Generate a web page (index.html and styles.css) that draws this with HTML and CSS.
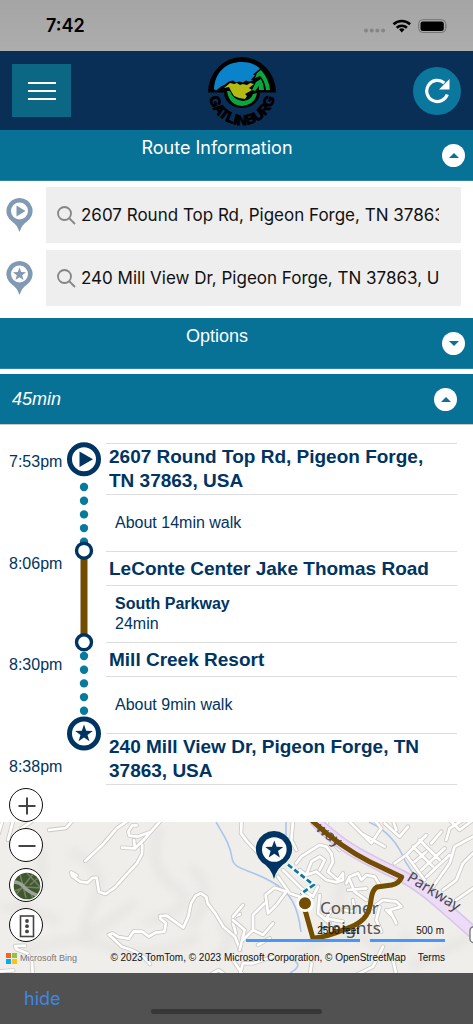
FILE: index.html
```html
<!DOCTYPE html>
<html lang="en">
<head>
<meta charset="utf-8">
<meta name="viewport" content="width=device-width, initial-scale=1">
<title>Gatlinburg Trip Planner</title>
<link rel="stylesheet" href="styles.css">
</head>
<body>
<div class="status">
  <span class="clock">7:42</span>
  <svg class="status-icons" width="86" height="20" viewBox="0 0 86 20" aria-hidden="true">
    <g fill="#858585"><circle cx="5" cy="14.500" r="2"/><circle cx="10.700" cy="14.500" r="2"/><circle cx="16.400" cy="14.500" r="2"/><circle cx="22.100" cy="14.500" r="2"/></g>
    <g fill="none" stroke="#000" stroke-width="2.600"><path d="M32.500 8.200a12.200 12.200 0 0 1 16.600 0"/><path d="M35.700 11.700a7.500 7.500 0 0 1 10.200 0"/></g>
    <path d="M40.800 16.400l-2.700-2.800a4 4 0 0 1 5.400 0z"/>
    <rect x="57.700" y="3.700" width="27" height="12.800" rx="4" fill="none" stroke="#747474"/>
    <rect x="59.500" y="5.400" width="23.300" height="9.500" rx="2.500"/>
    <path d="M85.500 8v4.500q1.500-2.200 0-4.500z" fill="#747474"/>
  </svg>
</div>

<header class="header">
  <button class="menu" type="button" aria-label="Menu">
    <svg width="28" height="20" viewBox="0 0 28 20"><path d="M0 2h28M0 10h28M0 18h28" stroke="#fff" stroke-width="2.200"/></svg>
  </button>
  <svg class="logo" width="70" height="70" viewBox="0 0 70 70" role="img" aria-label="Gatlinburg">
    <defs><path id="ring" d="M2 36a33 33 0 0 0 66 0"/></defs>
    <path d="M1 36.500a34 35.500 0 0 1 68 0H53a18 15.500 0 0 1-36 0z"/>
    <path d="M7 33C8 16 19 6 35 6c7 0 13 2 18 6.500l-7 6 2 1-4 4 2 1-4 1-3-1-3 2-4-1-3 1-3-2-4 1-4 3-4 2-5 4z" fill="#0b83cb"/>
    <path d="M17 32l6-5 4 1 3-1 3 2 3-1 4 1 3-2 4 1-5 4 3 2-7 4 2 2-2 3-6-1-5-2-3-5-2-4z" fill="#b3ba13"/>
    <path d="M50 17l4-3q8 9 9 20h-4q-1-9-6-14l-5 2zM49 26l5-3q3 5 3 11h-5v-4l-4 5-3-1z" fill="#09a83f"/>
    <path d="M20 35h3q3 9 13 10 8-1 10-7l4-1q-2 12-15 13-13-1-15-15z" fill="#09a83f"/>
    <text class="logo-text"><textPath href="#ring" startOffset="50%" text-anchor="middle">GATLINBURG</textPath></text>
  </svg>
  <button class="refresh" type="button" aria-label="Refresh">
    <svg width="26" height="26" viewBox="0 0 26 26"><path d="M23.300 16.500a10.600 10.600 0 1 1-3-11.500" fill="none" stroke="#fff" stroke-width="3.200"/><path d="M25.500 1v10.500H15z" fill="#fff"/></svg>
  </button>
</header>

<main>
  <section>
    <div class="bar">
      <h2 class="bar-title">Route Information</h2>
      <button class="toggle" type="button" aria-label="Collapse route information"><svg width="10" height="5" viewBox="0 0 10 5"><path d="M0 5l5-5 5 5z"/></svg></button>
    </div>
    <form class="search">
      <div class="row">
        <svg class="pin" viewBox="0 0 27 34" aria-hidden="true"><path d="M13.500 0a13 13 0 0 1 7 24q-4 2-7 10-3-8-7-10a13 13 0 0 1 7-24z" fill="#8299b3"/><circle cx="13.500" cy="13" r="8.500" fill="#fff"/><path d="M10.500 7.500l9 5.500-9 5.500z" fill="#8299b3"/></svg>
        <label class="field"><svg width="19" height="19" viewBox="0 0 19 19" fill="none" stroke="#858588" stroke-width="1.800"><circle cx="7.500" cy="7.500" r="6.500"/><path d="M12 12l6 6"/></svg><input type="text" aria-label="Start address" value="2607 Round Top Rd, Pigeon Forge, TN 37863, USA"></label>
      </div>
      <div class="row">
        <svg class="pin" viewBox="0 0 27 34" aria-hidden="true"><path d="M13.500 0a13 13 0 0 1 7 24q-4 2-7 10-3-8-7-10a13 13 0 0 1 7-24z" fill="#8299b3"/><circle cx="13.500" cy="13" r="8.500" fill="#fff"/><path d="M13.500 6.500l1.700 4.600 4.800.1-3.800 3 1.300 4.800-4-2.800-4 2.800 1.300-4.800-3.800-3 4.800-.1z" fill="#8299b3"/></svg>
        <label class="field"><svg width="19" height="19" viewBox="0 0 19 19" fill="none" stroke="#858588" stroke-width="1.800"><circle cx="7.500" cy="7.500" r="6.500"/><path d="M12 12l6 6"/></svg><input type="text" aria-label="Destination address" value="240 Mill View Dr, Pigeon Forge, TN 37863, USA"></label>
      </div>
    </form>
  </section>

  <div class="bar">
    <h2 class="bar-title options">Options</h2>
    <button class="toggle" type="button" aria-label="Expand options"><svg width="10" height="5" viewBox="0 0 10 5"><path d="M0 0l5 5 5-5z"/></svg></button>
  </div>

  <section>
    <div class="bar summary">
      <h2 class="duration">45min</h2>
      <button class="toggle" type="button" aria-label="Collapse itinerary"><svg width="10" height="5" viewBox="0 0 10 5"><path d="M0 5l5-5 5 5z"/></svg></button>
    </div>
    <div class="trip">
      <div class="times"><time>7:53pm</time><time>8:06pm</time><time>8:30pm</time><time>8:38pm</time></div>
      <svg class="track" width="34" height="309" viewBox="0 0 34 309" aria-hidden="true">
        <path d="M17 109v91" stroke="#734d00" stroke-width="7"/>
        <g fill="#087a9c"><circle cx="17" cy="45" r="4.200"/><circle cx="17" cy="58.700" r="4.200"/><circle cx="17" cy="72.400" r="4.200"/><circle cx="17" cy="86.100" r="4.200"/><circle cx="17" cy="99.800" r="4.200"/><circle cx="17" cy="214" r="4.200"/><circle cx="17" cy="227.700" r="4.200"/><circle cx="17" cy="241.400" r="4.200"/><circle cx="17" cy="255.100" r="4.200"/><circle cx="17" cy="268.800" r="4.200"/></g>
        <g fill="#fff" stroke="#003462"><circle cx="17" cy="17.300" r="14.500" stroke-width="5"/><circle cx="17" cy="291.500" r="14.500" stroke-width="5"/><circle cx="17" cy="108.700" r="7.500" stroke-width="3.400"/><circle cx="17" cy="200.300" r="7.500" stroke-width="3.400"/></g>
        <path d="M12.500 9.500l13.500 7.800-13.500 7.800zM17 282.500l2.200 6.200 6.600.2-5.300 4 2 6.300-5.500-3.700-5.500 3.700 2-6.300-5.300-4 6.600-.2z" fill="#003462"/>
      </svg>
      <ol class="steps">
        <li class="stop">2607 Round Top Rd, Pigeon Forge, TN 37863, USA</li>
        <li class="leg">About 14min walk</li>
        <li class="stop">LeConte Center Jake Thomas Road</li>
        <li class="leg"><b>South Parkway</b><span>24min</span></li>
        <li class="stop">Mill Creek Resort</li>
        <li class="leg">About 9min walk</li>
        <li class="stop">240 Mill View Dr, Pigeon Forge, TN 37863, USA</li>
      </ol>
    </div>
  </section>

  <section class="map" aria-label="Map">
    <svg class="map-art" viewBox="0 0 473 151" preserveAspectRatio="xMidYMid slice">
      <defs>
        <filter id="soft" x="-20%" y="-20%" width="140%" height="140%"><feGaussianBlur stdDeviation="5"/></filter>
        <g id="west">
          <path d="M8 120L-4 160M40 120L24 180M65 145L100 120M147 150L198 144 219 120M256 243L310 192 350 145 386 120M484 120L453 155 430 181 405 205 366 203M405 205L402 180M453 155L412 170 388 167 385 155 397 136 410 136M427 195L426 222 411 250 380 283 345 322 317 342 297 336 290 293 277 294 262 308 240 305 216 287 214 277 230 287"/>
          <path d="M450 552L430 530 395 510 365 500 339 475 326 464 338 460 355 471 386 476 401 454 427 455 447 470 466 458 493 455 498 430 481 416 480 408 500 407 525 425 550 443 565 410 573 370 587 347 603 340 619 351 623 370 646 400 670 440 705 470 720 510M720 403L704 410 699 430 708 460M98 585L96 545 82 520 50 508 45 498 75 497M0 574L40 571M630 585L656 570 676 585"/>
        </g>
        <g id="east">
          <path d="M26 120L24 160 42 184 90 235M180 120L175 180 190 210M285 120L270 155 320 210M0 410L30 375M20 510L35 450 0 420M30 480L60 450 60 405 95 370M60 450L90 465 120 430M75 495L110 475M135 290L170 340 200 350M150 270L205 325 240 350 255 320M190 250L205 230 260 195 280 200 295 220 300 245 285 275 315 300 330 280 330 300 310 307 280 300 250 275 220 285 200 270M220 285L235 245 260 230 275 240 260 270"/>
          <path d="M345 120L415 190 445 145 425 120M385 160L455 200M455 130L500 170 525 140M490 150L480 120M485 250L520 225 580 165M540 200L600 260M560 180L620 240M520 225L575 300M545 245L580 215M565 270L635 205M580 290L650 225M600 320L650 250 665 200 720 170M630 330L670 300 690 250 720 220M640 180L650 145 690 120M670 360L720 325M650 120L680 150 720 120M595 190L625 155"/>
          <path d="M340 310L350 290 375 280 385 300 400 285 425 290 440 315M345 330L400 325M350 300L365 335 400 360M415 385L450 360 490 365 505 380 470 390 490 430M440 380L430 420 445 455M460 390L480 410M300 385L280 415 330 425M260 345L255 400 290 430M330 390L365 395 360 360M480 540L490 585M370 585L420 560 450 500"/>
          <path d="M105 400L98 345 125 323 160 335 130 375 105 400"/>
          <path d="M20 585L30 550 60 550 120 530M0 540L30 585M230 590L236 550"/>
        </g>
      </defs>
      <rect width="473" height="151" fill="#efeeeb"/>
      <g fill="none" stroke="#dddcd9" stroke-width="7" opacity=".55" filter="url(#soft)"><path d="M35 20q20 35-15 60M70 30q45 15 20 60t45-10M160 5q-15 40 15 60t-30 35M20 130q60-20 90-5t90-10M190 45q30 20 0 60M220 100q20 20-5 35M300 130q45-30 70-10t40-10M410 145l60-30M0 85q30 0 60 15M350 55q-20 15-5 35"/></g>
      <g fill="none" stroke="#aac5ed" stroke-width="1.600"><path d="M216 0c8 14 14 22 16 36 2 13 17 10 40 24 19 10 26 25 29 50M286 0v24M369 0c18 8 29 21 36 39l16 25M290 151c15-8 5-13-2-15"/></g>
      <g transform="translate(0 -42) scale(.3333)" class="casing"><use href="#west"/></g>
      <g transform="translate(0 -42) scale(.3333)" class="road"><use href="#west"/></g>
      <g transform="translate(233 -42) scale(.3333)">
        <g class="casing"><use href="#east"/></g><g class="road"><use href="#east"/></g>
        <path d="M245 120C330 210 420 245 500 285S630 380 730 465" fill="none" stroke="#d9c5e5" stroke-width="38"/>
        <path d="M245 120C330 210 420 245 500 285S630 380 730 465" fill="none" stroke="#ecdcf7" stroke-width="29"/>
        <rect x="711" y="440" width="34" height="48" rx="12" fill="#fff" stroke="#777" stroke-width="4"/>
      </g>
      <g class="place"><text x="320" y="92">Conner</text><text x="319" y="112">Heights</text></g>
      <g class="street"><text transform="translate(315 8) rotate(38)">way</text><text transform="translate(406 58) rotate(32)">Parkway</text></g>
      <g transform="translate(233 -42) scale(.3333)">
        <path d="M235 120Q320 200 410 245L506 291Q500 310 476 315L432 321Q417 330 414 360C410 410 385 432 330 450Q285 470 240 475L216 390" fill="none" stroke="#734d00" stroke-width="15" stroke-linejoin="round" stroke-linecap="round"/>
        <path d="M165 254L242 315 203 342" fill="none" stroke="#fff" stroke-width="12"/>
        <path d="M165 254L242 315 203 342" fill="none" stroke="#087a9c" stroke-width="8" stroke-dasharray="16 8"/>
        <circle cx="216" cy="370" r="22" fill="#734d00" stroke="#fff" stroke-width="8"/>
      </g>
      <path d="M274 9a18 18 0 0 1 12 31.500q-9 5-12 16.500-3-11.500-12-16.500a18 18 0 0 1 12-31.500z" fill="#003462"/>
      <circle cx="274.300" cy="27.500" r="12.300" fill="#fff"/>
      <path d="M274.300 18.500l2.300 6.300 6.700.2-5.300 4.100 1.900 6.400-5.600-3.800-5.600 3.800 1.900-6.400-5.300-4.100 6.700-.2z" fill="#003462"/>
    </svg>
    <div class="controls">
      <button type="button" aria-label="Zoom in"><svg viewBox="0 0 34 34"><path d="M17 8.500v17M8.500 17h17" stroke="#444" stroke-width="2"/></svg></button>
      <button type="button" aria-label="Zoom out"><svg viewBox="0 0 34 34"><path d="M8.500 17h17" stroke="#444" stroke-width="2"/></svg></button>
      <button type="button" aria-label="Aerial view"><svg viewBox="0 0 34 34"><defs><clipPath id="disc"><circle cx="17" cy="17" r="13.300"/></clipPath></defs><g clip-path="url(#disc)"><path d="M0 0h34v34H0z" fill="#41582f"/><path d="M4 28L24 4M10 5l6 24M17 4l13 14M4 22l12-4 16 1M20 16l9-8M20 22l4 10" stroke="#748066" stroke-width="1.500" fill="none"/><path d="M3 13q7 0 11 5t17 10" fill="none" stroke="#9ba599" stroke-width="3.600"/></g></svg></button>
      <button type="button" aria-label="Traffic"><svg viewBox="0 0 34 34"><rect x="10.500" y="7" width="13" height="20.500" fill="none" stroke="#444" stroke-width="1.600"/><g fill="#444"><circle cx="17" cy="12" r="1.900"/><circle cx="17" cy="17.200" r="1.900"/><circle cx="17" cy="22.400" r="1.900"/></g></svg></button>
    </div>
    <div class="scales"><span class="feet">2500 feet</span><span class="metres">500 m</span></div>
    <div class="credits">
      <span class="bing"><svg width="11" height="11" viewBox="0 0 11 11" aria-hidden="true"><path d="M0 0h5v5H0z" fill="#f26522"/><path d="M6 0h5v5H6z" fill="#8dc63f"/><path d="M0 6h5v5H0z" fill="#00adef"/><path d="M6 6h5v5H6z" fill="#ffc20e"/></svg>Microsoft Bing</span>
      <span class="copy">© 2023 TomTom, © 2023 Microsoft Corporation, © OpenStreetMap</span>
      <a href="#terms">Terms</a>
    </div>
  </section>
</main>

<footer class="footer">
  <button class="hide" type="button">hide</button>
  <div class="home"></div>
</footer>
</body>
</html>
```

FILE: styles.css
```css
* { box-sizing: border-box; }
body { margin: 0; min-height: 100vh; display: flex; flex-direction: column; background: #fff; font-family: "Liberation Sans", Arial, sans-serif; }
button { border: 0; padding: 0; margin: 0; display: grid; place-items: center; font: inherit; cursor: pointer; }
h2 { margin: 0; font-weight: 400; }
svg { display: block; flex: none; }

.status { display: flex; justify-content: space-between; align-items: center; height: 51px; padding: 0 26px 0 46px; background: linear-gradient(#a5a5a5, #adadad); }
.clock { font: 600 18px/24px Inter, sans-serif; }

.header { display: flex; justify-content: space-between; align-items: center; height: 79px; padding: 0 12px; background: #0a2f57; }
.menu { width: 59px; height: 53px; background: #0b6784; }
.logo { overflow: visible; }
.logo-text { font: bold 14px "Liberation Sans", Arial, sans-serif; stroke: #000; stroke-width: 1px; }
.refresh { width: 48px; height: 48px; border-radius: 50%; background: #0b779d; }

.bar { display: flex; align-items: center; gap: 8px; height: 51px; padding-right: 8px; background: #087196; color: #fff; border-bottom: 1px solid #2d84a4; }
.bar-title { flex: 1; align-self: flex-start; padding-top: 6px; text-align: center; font: 400 18px/24px Inter, sans-serif; }
.options { font: 400 18px/24px "Liberation Sans", Arial, sans-serif; }
.toggle { width: 23px; height: 23px; border-radius: 50%; background: #fff; }
.toggle svg { fill: #087196; }
.summary { margin-top: 5px; padding: 0 16px 0 12px; border-bottom-color: #c8c8c8; }
.duration { flex: 1; font-size: 18px; line-height: 24px; font-style: italic; }

.search { display: grid; gap: 7px; padding: 6px 12px 12px 6px; }
.row { display: flex; align-items: center; gap: 13px; }
.pin { width: 27px; height: 34px; }
.field { display: flex; flex: 1; min-width: 0; align-items: center; gap: 5px; height: 56px; padding: 0 22px 0 11px; background: #eee; }
.field input { flex: 1; min-width: 0; border: 0; padding: 0; outline: 0; background: none; color: #111; font: 400 17px/24px Inter, sans-serif; }

.trip { display: flex; padding: 17px 16px 37px 9px; color: #003462; }
.times { display: flex; flex-direction: column; justify-content: space-between; width: 58px; padding: 10px 0 8px; font-size: 16px; line-height: 20px; }
.steps { flex: 1; min-width: 0; margin: 1px 0 0 5px; padding: 0; list-style: none; border-top: 1px solid #ddd; }
.steps li { border-bottom: 1px solid #ddd; }
.stop { padding: 1px 16px 1px 3px; font-size: 19px; line-height: 24px; font-weight: 700; }
.stop:nth-child(3), .stop:nth-child(5) { padding-top: 5px; padding-bottom: 4px; }
.leg { display: flex; flex-direction: column; justify-content: center; height: 57px; padding: 0 9px; font-size: 16px; line-height: 20px; }

.map { position: relative; height: 151px; }
.map-art { width: 100%; height: 100%; }
.casing, .road { fill: none; stroke-linejoin: round; stroke-linecap: round; }
.casing { stroke: #cbc9c3; stroke-width: 13px; }
.road { stroke: #fff; stroke-width: 8px; }
.place { font: 17px "Noto Sans", sans-serif; fill: #515151; }
.street { font: 15px "Noto Sans", sans-serif; fill: #4b4554; }
.controls { position: absolute; left: 9px; top: -34px; display: grid; gap: 6px; }
.controls button { width: 34px; height: 34px; border: 1px solid #111; border-radius: 50%; background: #fff; }
.controls svg { width: 34px; height: 34px; }
.scales { position: absolute; right: 28px; bottom: 31px; display: flex; gap: 10px; font-size: 10px; line-height: 16px; text-align: right; color: #111; }
.scales span { border-bottom: 3px solid #4797fb; }
.feet { width: 114px; padding-right: 1px; }
.metres { width: 75px; padding-right: 1px; }
.credits { position: absolute; left: 6px; right: 28px; bottom: 7px; display: flex; justify-content: space-between; align-items: center; font-size: 10px; line-height: 16px; white-space: nowrap; color: #111; }
.bing { display: flex; align-items: center; gap: 3px; font-size: 9px; color: #777; }
.copy { margin-left: auto; margin-right: 12px; }
.credits a { color: #111; text-decoration: none; }

.footer { flex: 1; min-height: 51px; padding: 14px 24px 10px; position: relative; background: #515151; }
.hide { background: none; color: #3e86e5; font: 400 18px/24px Inter, sans-serif; }
.home { position: absolute; left: 32%; right: 32%; bottom: 10px; height: 5px; border-radius: 3px; background: #373737; }
```
